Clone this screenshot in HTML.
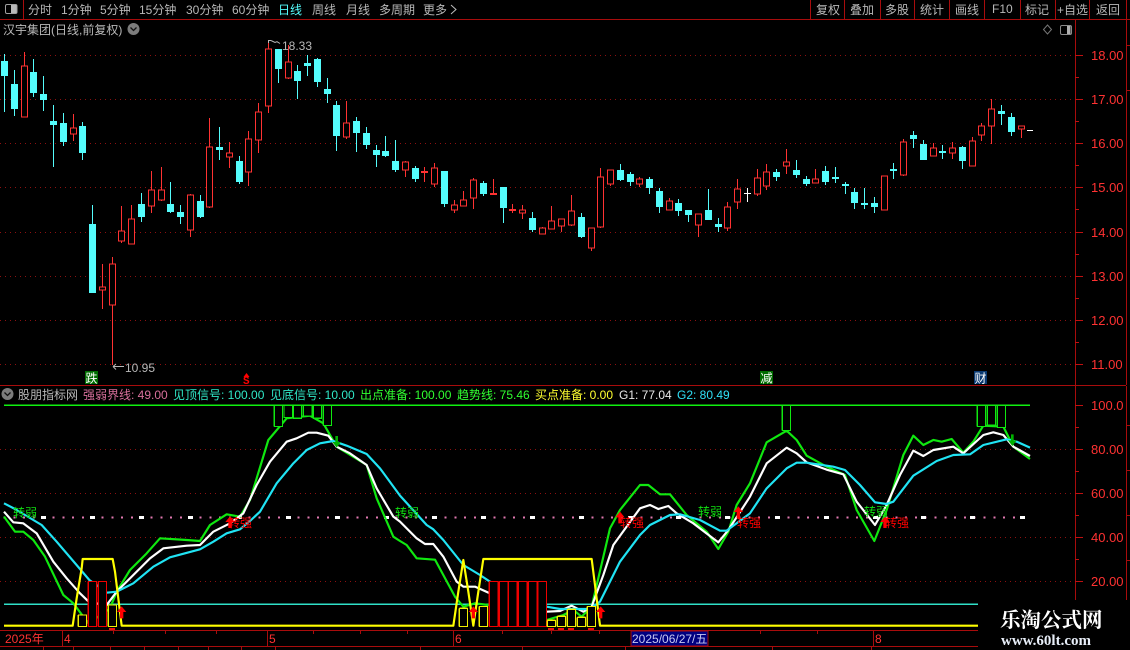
<!DOCTYPE html>
<html><head><meta charset="utf-8"><style>
html,body{margin:0;padding:0;background:#000;width:1130px;height:650px;overflow:hidden}
svg{display:block;position:absolute;left:0;top:0}
text{font-family:"Liberation Sans","WenQuanYi Zen Hei","Noto Sans CJK SC",sans-serif;font-size:12px;white-space:pre}
.g{fill:#b8b8b8}.r{fill:#ff3232;font-size:13px}
</style></head><body>
<svg width="1130" height="650" viewBox="0 0 1130 650" xmlns="http://www.w3.org/2000/svg">
<rect width="1130" height="650" fill="#000"/>
<g shape-rendering="crispEdges">
<!-- frame lines -->
<path d="M0 19.5H1130M23.5 0V19M810.5 0V19M844.5 0V19M880.5 0V19M914.5 0V19M949.5 0V19M984.5 0V19M1020.5 0V19M1055.5 0V19M1089.5 0V19M1126.5 0V385M1126 45.5H1130M1126 90.5H1130M0 385.5H1126M1075.5 20V600M1126.5 386V600M1126 425.5H1130M1126 470.5H1130M1126 515.5H1130M1126 560.5H1130" stroke="#a80c0c" fill="none"/>
<!-- axis ticks -->
<path d="M1075 55.5h8M1075 99.5h8M1075 143.5h8M1075 187.5h8M1075 232.5h8M1075 276.5h8M1075 320.5h8M1075 364.5h8M1075 77.5h4M1075 121.5h4M1075 165.5h4M1075 209.5h4M1075 254.5h4M1075 298.5h4M1075 342.5h4M1075 405.5h8M1075 449.5h8M1075 493.5h8M1075 537.5h8M1075 581.5h8M1075 427.5h4M1075 471.5h4M1075 515.5h4M1075 559.5h4" stroke="#c01010" fill="none"/>
<!-- dotted grid -->
<path d="M0 55.5H1075M0 99.5H1075M0 143.5H1075M0 187.5H1075M0 232.5H1075M0 276.5H1075M0 320.5H1075M0 364.5H1075M0 449.5H1075M0 493.5H1075M0 537.5H1075M0 581.5H1075" stroke="#8c1010" stroke-dasharray="1 4" fill="none"/>
<!-- cyan candles -->
<path stroke="#54fcfc" fill="none" d="M4.5 54V112M14.5 70V116M33.5 59V97M43.5 76V111M53.5 105V167M63.5 113V146M82.5 122V160M92.5 205V293M141.5 193V222M170.5 182V213M180.5 205V224M200.5 195V218M219.5 127V160M239.5 156V184M278.5 49V83M297.5 65V99M307.5 55V76M317.5 58V87M327.5 78V103M336.5 101V151M356.5 117V152M366.5 127V149M376.5 145V167M385.5 136V157M395.5 140V172M415.5 166V182M444.5 171V207M483.5 181V196M503.5 187V223M532.5 212V232M581.5 213V238M620.5 164V181M630.5 172V186M649.5 177V194M659.5 188V213M678.5 199V216M688.5 210V222M708.5 189V220M718.5 218V232M776.5 169V181M796.5 160V178M806.5 176V186M825.5 166V185M835.5 167V183M845.5 182V194M854.5 188V209M864.5 188V209M874.5 197V213M893.5 163V179M913.5 131V148M923.5 140V160M942.5 145V159M962.5 146V169M1001.5 105V125M1011.5 113V136"/>
<path fill="#54fcfc" d="M1 61h7V76H1zM11 84h7V109H11zM30 72h7V93H30zM40 94h7V100H40zM50 121h7V125H50zM60 123h7V142H60zM79 126h7V153H79zM89 224h7V293H89zM138 204h7V217H138zM167 204h7V212H167zM177 212h7V217H177zM197 201h7V217H197zM216 147h7V150H216zM236 161h7V182H236zM275 49h7V69H275zM294 71h7V81H294zM304 63h7V66H304zM314 59h7V82H314zM324 89h7V94H324zM333 105h7V136H333zM353 121h7V133H353zM363 133h7V145H363zM373 150h7V155H373zM382 151h7V156H382zM392 161h7V170H392zM412 168h7V179H412zM441 171h7V204H441zM480 183h7V194H480zM500 187h7V208H500zM529 218h7V230H529zM578 217h7V237H578zM617 170h7V180H617zM627 174h7V182H627zM646 179h7V188H646zM656 191h7V207H656zM675 203h7V211H675zM685 210h7V215H685zM705 210h7V220H705zM715 224h7V227H715zM773 172h7V177H773zM793 170h7V175H793zM803 179h7V184H803zM822 171h7V182H822zM832 177h7V179H832zM842 184h7V186H842zM851 192h7V203H851zM861 203h7V205H861zM871 203h7V207H871zM890 169h7V171H890zM910 135h7V139H910zM920 144h7V160H920zM939 151h7V153H939zM959 147h7V161H959zM998 111h7V114H998zM1008 117h7V132H1008z"/>
<!-- red candles -->
<path stroke="#ff3232" fill="none" d="M24.5 52V117M73.5 114V141M102.5 264V309M112.5 257V365M121.5 206V243M131.5 205V244M151.5 171V213M161.5 167V201M190.5 194V237M209.5 118V208M229.5 142V168M248.5 131V186M258.5 103V153M268.5 43V113M288.5 45V79M346.5 101V139M405.5 161V177M424.5 167V182M434.5 163V187M454.5 200V213M463.5 191V206M473.5 178V209M493.5 179V195M512.5 204V213M522.5 205V219M542.5 227V234M551.5 206V229M561.5 219V232M571.5 195V226M591.5 228V251M600.5 168V228M610.5 170V186M639.5 177V187M669.5 198V210M698.5 214V237M727.5 202V231M737.5 179V209M757.5 169V196M766.5 164V190M786.5 149V174M815.5 169V183M884.5 176V210M903.5 139V176M933.5 143V156M952.5 142V159M972.5 137V166M981.5 123V141M991.5 99V144M1021.5 126V138"/>
<path stroke="#ff3232" fill="#000" d="M21.5 66h6V117h-6zM70.5 128h6V134h-6zM99.5 287h6V290h-6zM109.5 264h6V305h-6zM118.5 231h6V241h-6zM128.5 219h6V244h-6zM148.5 190h6V206h-6zM158.5 190h6V200h-6zM187.5 195h6V230h-6zM206.5 147h6V207h-6zM226.5 153h6V157h-6zM245.5 139h6V172h-6zM255.5 112h6V140h-6zM265.5 49h6V106h-6zM285.5 62h6V78h-6zM343.5 123h6V137h-6zM402.5 162h6V170h-6zM431.5 168h6V184h-6zM451.5 205h6V210h-6zM460.5 200h6V206h-6zM470.5 180h6V198h-6zM519.5 210h6V213h-6zM539.5 228h6V234h-6zM548.5 221h6V229h-6zM558.5 219h6V226h-6zM568.5 211h6V225h-6zM588.5 228h6V248h-6zM597.5 177h6V227h-6zM607.5 170h6V184h-6zM636.5 179h6V184h-6zM666.5 201h6V210h-6zM695.5 214h6V225h-6zM724.5 207h6V228h-6zM734.5 189h6V202h-6zM754.5 178h6V194h-6zM763.5 172h6V186h-6zM783.5 162h6V166h-6zM812.5 179h6V183h-6zM881.5 176h6V210h-6zM900.5 142h6V175h-6zM930.5 148h6V156h-6zM949.5 148h6V153h-6zM969.5 141h6V166h-6zM978.5 126h6V135h-6zM988.5 109h6V126h-6zM1018.5 126h6V129h-6z"/>
<path fill="#ff3232" d="M421 171h7v2h-7zM490 193h7v2h-7zM509 209h7v2h-7z"/>
<path stroke="#fff" fill="none" d="M747.5 188V202M744 193.5H751M1027 130.5H1033"/>
<!-- signal boxes -->
<rect x="85" y="371" width="13" height="13" fill="#006c00"/>
<rect x="760" y="371" width="13" height="13" fill="#006c00"/>
<rect x="974" y="371" width="13" height="13" fill="#0a3a72"/>
</g>
<!-- toolbar icon -->
<rect x="5.5" y="4.5" width="11.5" height="9" rx="1.5" fill="#000" stroke="#a0a0a0"/><rect x="11" y="5" width="5.5" height="8" fill="#b8b8b8"/>
<text class="g" x="28" y="14">分时</text><text class="g" x="61" y="14">1分钟</text><text class="g" x="100" y="14">5分钟</text><text class="g" x="139" y="14">15分钟</text><text class="g" x="186" y="14">30分钟</text><text class="g" x="232" y="14">60分钟</text>
<text x="278" y="14" fill="#54fcfc">日线</text><text class="g" x="312" y="14">周线</text><text class="g" x="346" y="14">月线</text><text class="g" x="379" y="14">多周期</text><text class="g" x="423" y="14">更多</text>
<path d="M451 5l5 4.5-5 4.5" stroke="#bdbdbd" fill="none"/>
<text class="g" x="816" y="14">复权</text><text class="g" x="850" y="14">叠加</text><text class="g" x="885" y="14">多股</text><text class="g" x="920" y="14">统计</text><text class="g" x="955" y="14">画线</text><text class="g" x="992" y="13">F10</text><text class="g" x="1025" y="14">标记</text><text class="g" x="1057" y="14">+自选</text><text class="g" x="1096" y="14">返回</text>
<text class="g" x="3" y="34">汉宇集团(日线,前复权)</text>
<circle cx="133.500" cy="29" r="6" fill="#7c7c7c"/><path d="M130.500 27.500l3 3 3-3" stroke="#111" stroke-width="1.300" fill="none"/>
<path d="M1047.500 25l4 4.500-4 4.500-4-4.500z" stroke="#777" fill="none"/>
<rect x="1060.500" y="25.500" width="11" height="9" rx="1.500" fill="#000" stroke="#8a8a8a"/><rect x="1067" y="26" width="3.500" height="8" fill="#b0b0b0"/>
<!-- high/low -->
<path d="M268.500 43V40.500h3M268.500 40.500h3M271 40.500l4 2 2-.8 3 1.800" stroke="#b8b8b8" fill="none"/>
<text class="g" x="282" y="50">18.33</text>
<path d="M113 366.500h11M113 366.500l3-2.500M113 366.500l3 3" stroke="#b8b8b8" fill="none"/>
<text class="g" x="125" y="372">10.95</text>
<!-- signal letters -->
<text x="85.500" y="382.500" fill="#fff">跌</text>
<text x="760.500" y="382.500" fill="#fff">减</text>
<text x="974.500" y="382.500" fill="#fff">财</text>
<path d="M246.500 373l3 4h-6z" fill="#f00"/><text x="243" y="384" fill="#f00" style="font-size:11px;font-weight:bold;font-family:'Liberation Mono',monospace">S</text>
<!-- axis labels -->
<text class="r" x="1091" y="60">18.00</text><text class="r" x="1091" y="104">17.00</text><text class="r" x="1091" y="148">16.00</text><text class="r" x="1091" y="192">15.00</text><text class="r" x="1091" y="237">14.00</text><text class="r" x="1091" y="281">13.00</text><text class="r" x="1091" y="325">12.00</text><text class="r" x="1091" y="369">11.00</text>
<text class="r" x="1091" y="410">100.0</text><text class="r" x="1091" y="454">80.00</text><text class="r" x="1091" y="498">60.00</text><text class="r" x="1091" y="542">40.00</text><text class="r" x="1091" y="586">20.00</text>
<!-- indicator header -->
<circle cx="7.500" cy="394" r="6" fill="#7c7c7c"/><path d="M4.500 392.500l3 3 3-3" stroke="#111" stroke-width="1.300" fill="none"/>
<text class="g" x="18" y="399">股朋指标网</text>
<text x="83" y="399" fill="#d8709c">强弱界线: 49.00</text>
<text x="173" y="399" fill="#30e8c8">见顶信号: 100.00</text>
<text x="270" y="399" fill="#30e8c8">见底信号: 10.00</text>
<text x="360" y="399" fill="#30ff30">出点准备: 100.00</text>
<text x="457" y="399" fill="#30ff30">趋势线: 75.46</text>
<text x="535" y="399" fill="#ffff30">买点准备: 0.00</text>
<text x="619" y="399" fill="#e8e8e8">G1: 77.04</text>
<text x="677" y="399" fill="#30e0f8">G2: 80.49</text>
<!-- dots -->
<g shape-rendering="crispEdges">
<path d="M3.500 517.500H1031" stroke="#e078b0" stroke-width="2" stroke-dasharray="2 7.800" fill="none"/>
<path fill="#fff" d="M41 516h5v3h-5zM90 516h5v3h-5zM139 516h5v3h-5zM188 516h5v3h-5zM237 516h5v3h-5zM286 516h5v3h-5zM335 516h5v3h-5zM384 516h5v3h-5zM432 516h5v3h-5zM481 516h5v3h-5zM530 516h5v3h-5zM579 516h5v3h-5zM628 516h5v3h-5zM676 516h5v3h-5zM725 516h5v3h-5zM775 516h5v3h-5zM824 516h5v3h-5zM873 516h5v3h-5zM921 516h5v3h-5zM970 516h5v3h-5zM1020 516h5v3h-5z"/>
</g>
<!-- indicator curves, in 3x coords -->
<g transform="translate(0 385) scale(.33333)" fill="none" stroke-linejoin="round">
<path d="M12 61H3090" stroke="#10f010" stroke-width="3.500" shape-rendering="crispEdges"/>
<path d="M12 658H3090" stroke="#30e0c8" stroke-width="3.500" shape-rendering="crispEdges"/>
<polyline stroke="#10e810" stroke-width="6.500" points="12,395 45,440 70,440 100,465 135,515 190,630 220,655 265,715 330,670 350,620 390,555 440,505 480,460 560,465 600,468 630,420 680,388 720,395 750,345 770,280 805,165 860,100 930,92 970,115 1010,185 1100,240 1130,340 1180,455 1200,468 1220,480 1250,520 1305,524 1365,635 1390,665 1425,655 1465,660 1640,705 1690,690 1720,675 1745,695 1775,665 1830,430 1860,375 1920,300 1945,300 1980,328 2010,328 2060,390 2120,440 2155,492 2185,440 2210,360 2250,295 2300,172 2360,137 2390,165 2420,212 2480,245 2535,270 2570,375 2623,468 2660,375 2710,210 2740,152 2770,180 2800,165 2825,170 2855,162 2890,203 2920,170 2950,122 3010,125 3040,185 3090,222"/>
<polyline stroke="#fff" stroke-width="6.500" points="12,380 40,412 70,415 110,445 160,530 200,580 240,625 268,652 320,660 350,620 400,570 450,520 490,490 560,482 600,480 640,440 690,415 730,385 770,300 810,230 860,170 890,160 925,143 950,143 985,152 1010,185 1050,205 1100,240 1130,310 1180,395 1200,410 1250,460 1275,477 1300,477 1330,515 1370,590 1390,605 1425,605 1465,623 1640,680 1680,678 1715,662 1750,680 1775,665 1810,570 1840,480 1880,425 1920,370 1950,360 1975,372 2005,363 2030,385 2080,415 2155,472 2185,435 2250,335 2300,235 2360,188 2390,205 2420,232 2480,254 2530,268 2570,350 2625,420 2660,360 2700,270 2740,197 2770,213 2800,195 2860,185 2890,205 2950,150 2980,142 3010,150 3040,185 3090,213"/>
<polyline stroke="#20e4f4" stroke-width="6.500" points="12,355 45,372 125,420 170,470 240,552 268,585 320,623 350,620 400,595 460,545 510,517 600,493 640,470 680,445 720,433 750,408 780,380 830,295 880,235 920,195 960,175 1000,168 1040,182 1100,207 1140,250 1200,332 1230,365 1280,420 1300,433 1330,465 1390,540 1440,570 1470,590 1640,665 1680,672 1770,672 1800,650 1860,530 1920,450 1950,420 2010,390 2040,388 2100,405 2160,437 2180,437 2250,385 2300,310 2360,250 2390,233 2420,233 2500,245 2535,255 2580,300 2625,352 2660,357 2680,350 2740,272 2810,228 2860,210 2910,208 2950,180 3020,163 3050,170 3090,188"/>
<polyline stroke="#ffff00" stroke-width="6.500" points="12,722 218,722 230,640 245,550 248,522 338,522 345,560 365,722 1360,722 1375,620 1390,525 1405,620 1420,722 1435,620 1450,522 1775,522 1785,600 1800,722 3090,722"/>
<g stroke="#10e810" stroke-width="3.500" fill="#000" shape-rendering="crispEdges">
<path d="M823 62h25v63h-25zM852 62h26v36h-26zM880 62h25v38h-25zM910 62h26v31h-26zM940 62h25v38h-25zM970 62h25v60h-25zM2347 62h25v75h-25zM2932 62h25v63h-25zM2962 62h25v58h-25zM2992 62h25v66h-25z"/>
</g>
<g stroke="#f00000" stroke-width="3.500" fill="#000" shape-rendering="crispEdges">
<path d="M265 590h25v135h-25zM295 590h25v135h-25zM1468 590h26v135h-26zM1498 590h26v135h-26zM1526 590h26v135h-26zM1555 590h26v135h-26zM1585 590h26v135h-26zM1614 590h26v135h-26z"/>
</g>
<g stroke="#f0f000" stroke-width="3.500" fill="#000" shape-rendering="crispEdges">
<path d="M235 690h25v35h-25zM325 660h25v65h-25zM1378 670h25v55h-25zM1438 665h25v60h-25zM1642 706h25v19h-25zM1672 694h25v31h-25zM1702 673h25v52h-25zM1732 697h25v28h-25zM1762 665h25v60h-25z"/>
</g>
<g fill="#f00">
<path d="M365 664l14 17h-9v19h-10v-19h-9z"/><path d="M690 394l14 17h-9v18h-10v-18h-9z"/><path d="M1420 664l14 17h-9v19h-10v-19h-9z"/><path d="M1802 664l14 17h-9v19h-10v-19h-9z"/><path d="M1860 380l14 17h-9v18h-10v-18h-9z"/><path d="M2215 364l14 17h-9v19h-10v-19h-9z"/><path d="M2655 394l14 17h-9v18h-10v-18h-9z"/>
</g>
<g fill="#00b000">
<path d="M1010 188l-13-17h9v-18h8v18h9z"/><path d="M3037 183l-13-17h9v-18h8v18h9z"/>
</g>
</g>
<!-- 转弱/转强 labels -->
<text x="13" y="517" fill="#10e010">转弱</text><text x="395" y="517" fill="#10e010">转弱</text><text x="698" y="516" fill="#10e010">转弱</text><text x="864" y="516" fill="#10e010">转弱</text>
<text x="228" y="527" fill="#f00">转强</text><text x="620" y="527" fill="#f00">转强</text><text x="737" y="527" fill="#f00">转强</text><text x="885" y="527" fill="#f00">转强</text>
<!-- bottom strip -->
<g shape-rendering="crispEdges">
<path d="M0 630.500H978M0 646.500H978M62.500 631V646M267.500 631V646M453.500 631V646M873.500 631V646M165.500 631v3M216.500 631v3M113.500 631v3M313.500 631v3M360.500 631v3M407.500 631v3M502.500 631v3M551.500 631v3M599.500 631v3M760.500 631v3M817.500 631v3M43.500 647v3M73.500 647v3M110.500 647v3M144.500 647v3M178.500 647v3M208.500 647v3M241.500 647v3M275.500 647v3M420.500 647v3M522.500 647v3M625.500 647v3M772.500 647v3M871.500 647v3" stroke="#a80c0c" fill="none"/>
<path d="M109 628h6v2h-6zM548 628h6v2h-6zM558 628h6v2h-6zM568 628h6v2h-6zM588 628h6v2h-6z" fill="#f01010"/>
<rect x="631" y="631" width="77" height="15" fill="#000080" stroke="#a80c0c"/>
<rect x="978" y="600" width="152" height="50" fill="#000"/>
</g>
<text x="5" y="643" fill="#ff3232">2025年</text><text x="64" y="643" fill="#ff3232">4</text><text x="269" y="643" fill="#ff3232">5</text><text x="455" y="643" fill="#ff3232">6</text><text x="875" y="643" fill="#ff3232">8</text>
<text x="632" y="643" fill="#c8c8f0">2025/06/27/五</text>
<!-- watermark -->
<text x="1000" y="627" fill="#fff" style="font-family:'Liberation Serif','Noto Serif CJK SC',serif;font-size:20.500px;font-weight:bold">乐淘公式网</text>
<text x="1001" y="645" fill="#e8eef8" style="font-family:'Liberation Serif',serif;font-size:15px;font-weight:bold">www.60lt.com</text>
</svg>
</body></html>
